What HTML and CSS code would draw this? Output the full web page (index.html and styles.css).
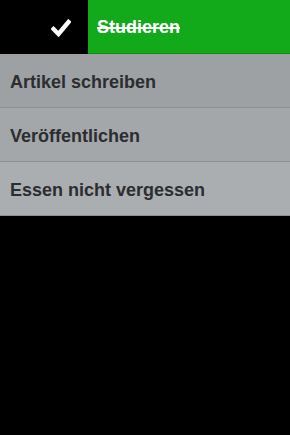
FILE: index.html
```html
<!DOCTYPE html>
<html>
<head>
<meta charset="utf-8">
<link rel="stylesheet" href="styles.css">
</head>
<body>
<div class="list">
  <div class="row done">
    <div class="check">
      <svg width="20" height="18" viewBox="0 0 20 18"><path d="M2.5 10 L7.5 15 L17.5 3" fill="none" stroke="#fff" stroke-width="4.4" stroke-linecap="square" stroke-linejoin="miter"/></svg>
    </div>
    <div class="done-label">Studieren</div>
  </div>
  <div class="row item item1">Artikel schreiben</div>
  <div class="row item item2">Veröffentlichen</div>
  <div class="row item item3">Essen nicht vergessen</div>
</div>
</body>
</html>
```
FILE: styles.css
```css
html, body { margin: 0; padding: 0; background: #000; }
body { width: 290px; height: 435px; font-family: "Liberation Sans", Arial, sans-serif; }
.list { display: flex; flex-direction: column; }
.row { height: 54px; box-sizing: border-box; display: flex; align-items: center; }
.done { background: #000; }
.check { width: 88px; height: 54px; display: flex; align-items: center; justify-content: flex-end; padding-right: 17px; padding-top: 1px; box-sizing: border-box; }
.done-label { flex: 1; height: 54px; background: #12a91b; border-bottom: 1px solid #0e8a15; box-sizing: border-box; display: flex; align-items: center; padding-left: 9px; padding-top: 2px; color: #fff; font-weight: bold; font-size: 18px; text-decoration: line-through; text-decoration-thickness: 2px; }
.item { padding-left: 10px; padding-top: 3px; font-weight: bold; font-size: 18px; color: #2b2d30; border-bottom: 1px solid #8d9093; }
.item1 { background: #9ea1a4; }
.item2 { background: #a4a7aa; }
.item3 { background: #abaeb1; }
```
